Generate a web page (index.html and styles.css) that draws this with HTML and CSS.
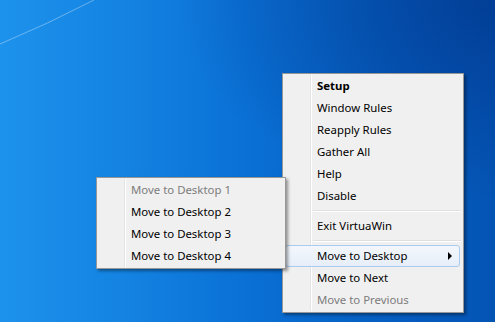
FILE: index.html
```html
<!DOCTYPE html>
<html>
<head>
<meta charset="utf-8">
<link rel="stylesheet" href="styles.css">
</head>
<body>
<div class="desktop">
  <svg class="streak" width="495" height="322" viewBox="0 0 495 322">
    <path d="M0 44 Q 48 24 94 0" stroke="rgba(255,255,255,0.35)" stroke-width="1" fill="none"/>
  </svg>

  <div class="menu main-menu">
    <div class="item bold">Setup</div>
    <div class="item">Window Rules</div>
    <div class="item">Reapply Rules</div>
    <div class="item">Gather All</div>
    <div class="item">Help</div>
    <div class="item">Disable</div>
    <div class="sep"></div>
    <div class="item">Exit VirtuaWin</div>
    <div class="sep"></div>
    <div class="item hot">Move to Desktop<span class="arrow"></span></div>
    <div class="item">Move to Next</div>
    <div class="item disabled">Move to Previous</div>
  </div>

  <div class="menu sub-menu">
    <div class="item disabled">Move to Desktop 1</div>
    <div class="item">Move to Desktop 2</div>
    <div class="item">Move to Desktop 3</div>
    <div class="item">Move to Desktop 4</div>
  </div>
</div>
</body>
</html>
```

FILE: styles.css
```css
html, body {
  margin: 0;
  padding: 0;
}

.desktop {
  position: relative;
  width: 495px;
  height: 322px;
  overflow: hidden;
  background:
    radial-gradient(ellipse 320px 200px at 495px 0px, rgba(0, 40, 120, 0.5), rgba(0, 40, 120, 0) 100%),
    linear-gradient(to right, #1d92ec 0%, #1483e2 25%, #0a70d5 50%, #0660c3 75%, #0454b4 100%);
  font-family: "Noto Sans", "Open Sans", sans-serif;
  font-size: 11.4px;
  color: #000;
}

.streak {
  position: absolute;
  left: 0;
  top: 0;
}

.menu {
  position: absolute;
  box-sizing: border-box;
  background: #f0f0f0;
  border: 1px solid #979797;
  padding: 1px 2px;
  box-shadow: 2px 2px 3px rgba(0, 0, 0, 0.4);
}

.menu::before {
  content: "";
  position: absolute;
  left: 27px;
  top: 1px;
  bottom: 1px;
  width: 1px;
  background: #e2e3e3;
  border-right: 1px solid #ffffff;
}

.main-menu {
  left: 282px;
  top: 73px;
  width: 182px;
}

.sub-menu {
  left: 96px;
  top: 177px;
  width: 190px;
  z-index: 2;
}

.item {
  position: relative;
  height: 22px;
  line-height: 22px;
  padding-left: 32px;
  white-space: nowrap;
}

.item.bold {
  font-weight: bold;
}

.item.disabled {
  color: #7c7c7c;
}

.item.hot {
  box-sizing: border-box;
  border: 1px solid #aacbef;
  border-radius: 3px;
  line-height: 20px;
  padding-left: 31px;
  margin-right: 1px;
  background: linear-gradient(#f3f7fc, #e6eef9);
}

.arrow {
  position: absolute;
  right: 7px;
  top: 6px;
  width: 0;
  height: 0;
  border-top: 4px solid transparent;
  border-bottom: 4px solid transparent;
  border-left: 4px solid #000;
}

.sep {
  height: 8px;
  margin-left: 28px;
  position: relative;
}

.sep::after {
  content: "";
  position: absolute;
  left: 0;
  right: 0;
  top: 3px;
  height: 1px;
  background: #e0e0e0;
  border-bottom: 1px solid #ffffff;
}
```
